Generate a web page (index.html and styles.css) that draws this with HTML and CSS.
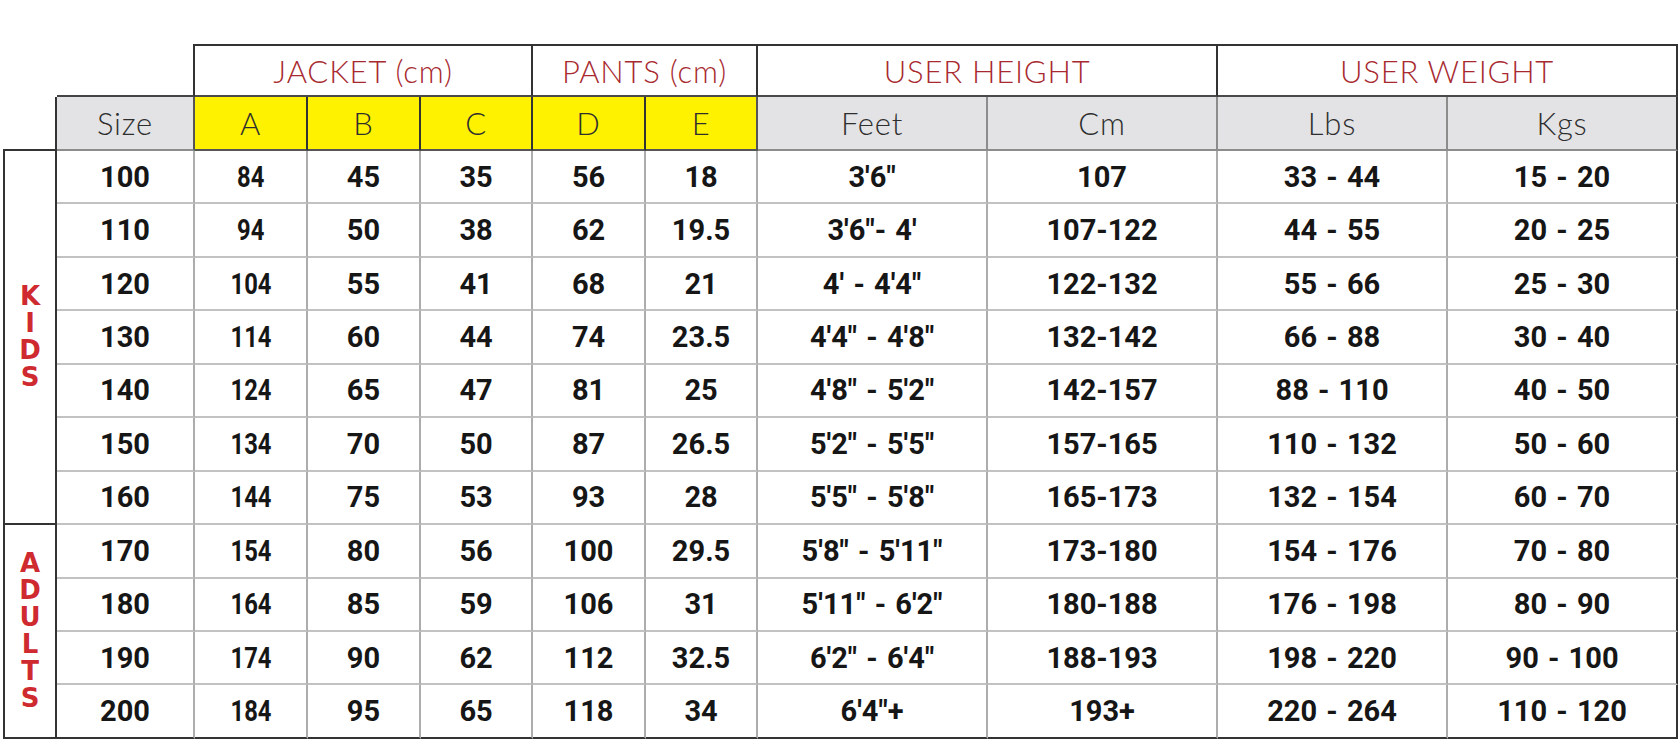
FILE: index.html
```html
<!DOCTYPE html>
<html lang="en">
<head>
<meta charset="utf-8">
<title>Size Chart</title>
<link rel="stylesheet" href="styles.css">
</head>
<body>
<table class="chart">
  <colgroup>
    <col class="col-grp">
    <col class="col-size">
    <col class="col-s1"><col class="col-s1"><col class="col-s2">
    <col class="col-s1"><col class="col-s2">
    <col class="col-w"><col class="col-w"><col class="col-w"><col class="col-w">
  </colgroup>
  <thead>
    <tr>
      <td class="blank"></td>
      <td class="blank blank-size"></td>
      <th colspan="3" class="grp">JACKET (cm)</th>
      <th colspan="2" class="grp">PANTS (cm)</th>
      <th colspan="2" class="grp">USER HEIGHT</th>
      <th colspan="2" class="grp">USER WEIGHT</th>
    </tr>
    <tr>
      <td class="blank blank-grp"></td>
      <th class="sub sub-size">Size</th>
      <th class="sub sub-y">A</th>
      <th class="sub sub-y">B</th>
      <th class="sub sub-y">C</th>
      <th class="sub sub-y">D</th>
      <th class="sub sub-y sub-y-end">E</th>
      <th class="sub">Feet</th>
      <th class="sub">Cm</th>
      <th class="sub">Lbs</th>
      <th class="sub sub-last">Kgs</th>
    </tr>
  </thead>
  <tbody>
    <tr>
      <td rowspan="7" class="label"><span>K</span><span>I</span><span>D</span><span>S</span></td>
      <td class="v">100</td><td class="v"><span class="narrow">84</span></td><td class="v">45</td><td class="v">35</td><td class="v">56</td><td class="v">18</td><td class="v">3'6"</td><td class="v">107</td><td class="v">33 - 44</td><td class="v end">15 - 20</td>
    </tr>
    <tr>
      <td class="v">110</td><td class="v"><span class="narrow">94</span></td><td class="v">50</td><td class="v">38</td><td class="v">62</td><td class="v">19.5</td><td class="v">3'6"- 4'</td><td class="v">107-122</td><td class="v">44 - 55</td><td class="v end">20 - 25</td>
    </tr>
    <tr>
      <td class="v">120</td><td class="v"><span class="narrow">104</span></td><td class="v">55</td><td class="v">41</td><td class="v">68</td><td class="v">21</td><td class="v">4' - 4'4"</td><td class="v">122-132</td><td class="v">55 - 66</td><td class="v end">25 - 30</td>
    </tr>
    <tr>
      <td class="v">130</td><td class="v"><span class="narrow">114</span></td><td class="v">60</td><td class="v">44</td><td class="v">74</td><td class="v">23.5</td><td class="v">4'4" - 4'8"</td><td class="v">132-142</td><td class="v">66 - 88</td><td class="v end">30 - 40</td>
    </tr>
    <tr>
      <td class="v">140</td><td class="v"><span class="narrow">124</span></td><td class="v">65</td><td class="v">47</td><td class="v">81</td><td class="v">25</td><td class="v">4'8" - 5'2"</td><td class="v">142-157</td><td class="v">88 - 110</td><td class="v end">40 - 50</td>
    </tr>
    <tr>
      <td class="v">150</td><td class="v"><span class="narrow">134</span></td><td class="v">70</td><td class="v">50</td><td class="v">87</td><td class="v">26.5</td><td class="v">5'2" - 5'5"</td><td class="v">157-165</td><td class="v">110 - 132</td><td class="v end">50 - 60</td>
    </tr>
    <tr>
      <td class="v">160</td><td class="v"><span class="narrow">144</span></td><td class="v">75</td><td class="v">53</td><td class="v">93</td><td class="v">28</td><td class="v">5'5" - 5'8"</td><td class="v">165-173</td><td class="v">132 - 154</td><td class="v end">60 - 70</td>
    </tr>
    <tr>
      <td rowspan="4" class="label"><span>A</span><span>D</span><span>U</span><span>L</span><span>T</span><span>S</span></td>
      <td class="v">170</td><td class="v"><span class="narrow">154</span></td><td class="v">80</td><td class="v">56</td><td class="v">100</td><td class="v">29.5</td><td class="v">5'8" - 5'11"</td><td class="v">173-180</td><td class="v">154 - 176</td><td class="v end">70 - 80</td>
    </tr>
    <tr>
      <td class="v">180</td><td class="v"><span class="narrow">164</span></td><td class="v">85</td><td class="v">59</td><td class="v">106</td><td class="v">31</td><td class="v">5'11" - 6'2"</td><td class="v">180-188</td><td class="v">176 - 198</td><td class="v end">80 - 90</td>
    </tr>
    <tr>
      <td class="v">190</td><td class="v"><span class="narrow">174</span></td><td class="v">90</td><td class="v">62</td><td class="v">112</td><td class="v">32.5</td><td class="v">6'2" - 6'4"</td><td class="v">188-193</td><td class="v">198 - 220</td><td class="v end">90 - 100</td>
    </tr>
    <tr class="last">
      <td class="v">200</td><td class="v"><span class="narrow">184</span></td><td class="v">95</td><td class="v">65</td><td class="v">118</td><td class="v">34</td><td class="v">6'4"+</td><td class="v">193+</td><td class="v">220 - 264</td><td class="v end">110 - 120</td>
    </tr>
  </tbody>
</table>
</body>
</html>
```

FILE: styles.css
```css
html, body {
  margin: 0;
  padding: 0;
  background: #ffffff;
}

.chart {
  border-collapse: separate;
  border-spacing: 0;
  table-layout: fixed;
  width: 1675px;
  margin: 44px 0 0 3px;
}

.col-grp { width: 54px; }
.col-size { width: 138px; }
.col-s1 { width: 113px; }
.col-s2 { width: 112px; }
.col-w { width: 230px; }

.chart tr {
  height: 53.46px;
}

.chart th,
.chart td {
  padding: 0;
  text-align: center;
  vertical-align: middle;
  box-sizing: border-box;
}

/* header row 1 */
.grp {
  border-top: 2px solid #333333;
  border-right: 2px solid #333333;
  border-bottom: 2px solid #4a4a4a;
  font-family: Lato, "Open Sans", sans-serif;
  font-weight: 300;
  font-size: 31px;
  letter-spacing: 0.8px;
  color: #a82a30;
}

.blank-size {
  border-right: 2px solid #333333;
  border-bottom: 2px solid #444444;
}

.blank-grp {
  border-right: 2px solid #333333;
  border-bottom: 2px solid #333333;
}

/* header row 2 */
.sub {
  font-family: Lato, "Open Sans", sans-serif;
  font-weight: 300;
  font-size: 31px;
  letter-spacing: 0.8px;
  color: #2e2e2e;
  background: #e3e3e5;
  border-right: 2px solid #8c8c8c;
  border-bottom: 2px solid #8c8c8c;
}

.sub-size {
  border-right-color: #555555;
}

.sub-y {
  background: #fff200;
  border-right-color: #333333;
  border-bottom-color: #555555;
}

.sub-y-end {
  border-right-color: #555555;
}

.sub-last {
  border-right-color: #333333;
}

/* body */
.label {
  border-left: 2px solid #333333;
  border-right: 2px solid #333333;
  border-bottom: 2px solid #333333;
  font-family: "DejaVu Sans", Roboto, sans-serif;
  font-weight: 700;
  font-size: 26px;
  line-height: 27px;
  color: #cf2a30;
}

.label span {
  display: block;
}

.v {
  border-right: 2px solid #adadad;
  border-bottom: 2px solid #c2c2c2;
  font-family: Roboto, "Liberation Sans", sans-serif;
  font-weight: 700;
  font-size: 29px;
  word-spacing: 2px;
  color: #161616;
  white-space: nowrap;
}

.v.end {
  border-right-color: #333333;
}

.last .v {
  border-bottom-color: #333333;
}

.narrow {
  display: inline-block;
  transform: scaleX(0.82);
}
```
